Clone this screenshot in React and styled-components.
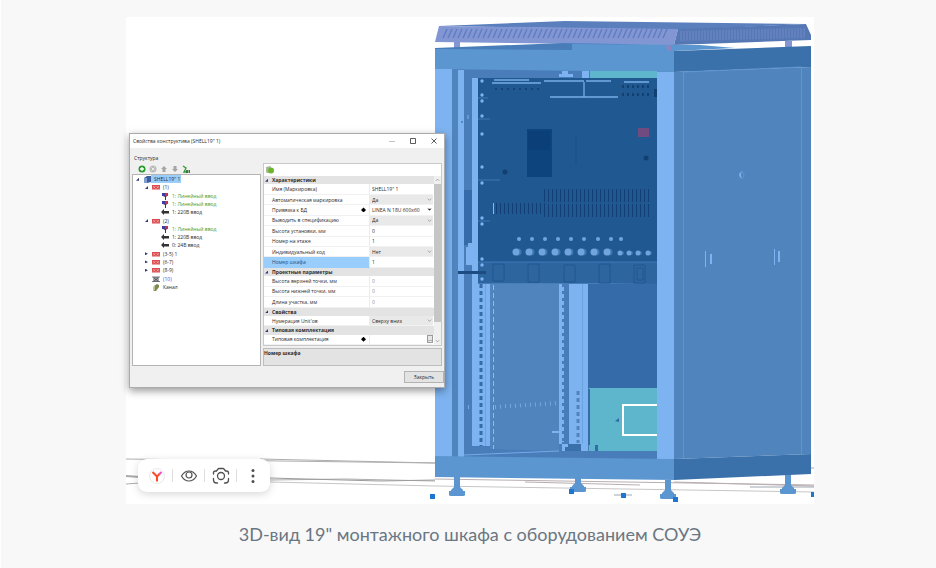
import React, { useId } from 'react';
import styled, { createGlobalStyle } from 'styled-components';

const colors = {
    page: '#f8f8f8',
    caption: '#6a7682',
    window: '#f0f0f0',
    border: '#a9abae',
    text: '#2b2b2b',
    muted: '#8c8c8c',
    green: '#3f9a2e',
    link: '#4a43e0',
    selected: '#99cdfb',
    section: '#e3e3e3',
    light: '#7db3f0',
    frame: '#5c96d0',
    panel: '#4f84bd',
    inner: '#487dba',
    deep: '#346ba8',
    side: '#3a71ab',
    device: '#205991',
    roof: '#8196d3',
    teal: '#5eb6cd',
};

const GlobalStyle = createGlobalStyle`
    * {
        box-sizing: border-box;
    }

    body {
        margin: 0;
        background: ${colors.page};
    }
`;

const Page = styled.main`
    min-height: 100vh;
    padding: 17px 0 16px 3px;
    border-left: 1px solid #fff;
`;

const Figure = styled.figure`
    max-width: 688px;
    margin: 0 auto;
`;

const Stage = styled.div`
    position: relative;
    background: #fff;
`;

const Caption = styled.figcaption`
    margin-top: 18px;
    font: 18px/24px Lato, 'Open Sans', sans-serif;
    text-align: center;
    color: ${colors.caption};
`;

const Drawing = styled.svg`
    display: block;
    width: 100%;
    height: auto;
`;

const Dialog = styled.section`
    position: absolute;
    left: 3px;
    top: 116px;
    width: 316px;
    border: 1px solid ${colors.border};
    background: ${colors.window};
    box-shadow: 0 3px 8px rgba(0, 0, 0, 0.4);
    color: ${colors.text};
    font: 5px/8px 'Open Sans', 'Noto Sans', sans-serif;
`;

const TitleBar = styled.header`
    display: flex;
    align-items: center;
    height: 14px;
    padding-left: 3px;
    background: #fff;
`;

const Title = styled.h2`
    flex: 1;
    margin: 0;
    font: inherit;
`;

const WindowButton = styled.button`
    display: flex;
    align-items: center;
    justify-content: center;
    width: 21px;
    height: 14px;
    padding: 0;
    border: 0;
    background: none;
    color: ${({ $dim }) => ($dim ? '#c4c4c4' : '#333')};

    svg {
        width: 6px;
        height: 6px;
    }
`;

const Heading = styled.h3`
    margin: 0;
    padding: 5px 4px 0;
    font: inherit;
    line-height: 10px;
`;

const Columns = styled.div`
    display: grid;
    grid-template-columns: 129px 1fr;
    gap: 2px;
    height: 203px;
    padding: 0 2px;
`;

const Column = styled.div`
    display: flex;
    flex-direction: column;
    min-height: 0;
`;

const TreeTools = styled.div`
    display: flex;
    align-items: center;
    gap: 3px;
    height: 11px;
    padding-left: 6px;
`;

const ToolButton = styled.button`
    display: flex;
    width: 8px;
    height: 8px;
    padding: 0;
    border: 0;
    background: none;

    svg {
        width: 8px;
        height: 8px;
    }
`;

const TreeBox = styled.div`
    flex: 1;
    border: 1px solid #b4b4b4;
    background: #fff;
`;

const Tree = styled.ul`
    display: grid;
    grid-auto-rows: 1fr;
    height: 116px;
    margin: 0;
    padding: 0;
    list-style: none;
`;

const Node = styled.li`
    display: flex;
    align-items: center;
    padding-left: ${({ $level }) => 2 + $level * 9}px;
    color: ${({ $color }) => $color || 'inherit'};

    svg {
        flex: none;
        width: 8px;
        height: 8px;
    }
`;

const Expander = styled.span`
    flex: none;
    width: 8px;
    color: #2f3a78;

    &::before {
        content: '';
        display: ${({ $state }) => ($state ? 'block' : 'none')};
        width: 3px;
        height: 3px;
        margin-left: 1px;
        background: currentColor;
        clip-path: ${({ $state }) =>
            $state === 'open' ? 'polygon(100% 0, 100% 100%, 0 100%)' : 'polygon(0 0, 100% 50%, 0 100%)'};
    }
`;

const NodeLabel = styled.span`
    padding: 0 1px 0 3px;
    background: ${({ $selected }) => ($selected ? colors.selected : 'none')};
    white-space: nowrap;
`;

const PropertyTools = styled.div`
    display: flex;
    align-items: center;
    height: 13px;
    padding-left: 2px;
    border: 1px solid #c9c9c9;
    border-bottom: 0;
    background: #fff;
`;

const PropertyArea = styled.div`
    display: flex;
    flex: 1;
    min-height: 0;
    border: 1px solid #c9c9c9;
    border-top: 0;
    background: #fff;
`;

const PropertyList = styled.form`
    display: flex;
    flex: 1;
    flex-direction: column;
    min-width: 0;
`;

const Section = styled.h4`
    display: flex;
    flex: 8 0 0;
    align-items: center;
    margin: 0;
    background: ${colors.section};
    font: inherit;
    font-weight: 700;
`;

const Property = styled.div`
    display: flex;
    flex: 10 0 0;
    align-items: stretch;
    min-height: 0;
`;

const PropertyName = styled.label`
    display: flex;
    align-items: center;
    justify-content: space-between;
    width: 106px;
    padding: 0 3px 0 8px;
    border-right: 1px solid #ececec;
    border-bottom: 1px solid ${({ $selected }) => ($selected ? colors.selected : '#f1f1f1')};
    background: ${({ $selected }) => ($selected ? colors.selected : 'none')};
    color: ${({ $selected }) => ($selected ? '#1d4f80' : 'inherit')};
`;

const Diamond = styled.span`
    width: 5px;
    height: 5px;
    background: #000;
    clip-path: polygon(50% 0, 100% 50%, 50% 100%, 0 50%);
`;

const Field = styled.span`
    display: flex;
    flex: 1;
    align-items: center;
    min-width: 0;
    margin-right: 1px;
    border-bottom: 1px solid #f1f1f1;
    background: ${({ $filled }) => ($filled ? '#e9e9e9' : 'none')};

    svg {
        flex: none;
        width: 5px;
        height: 5px;
        margin-right: 1px;
        pointer-events: none;
    }
`;

const TextInput = styled.input`
    flex: 1;
    width: 0;
    height: 8px;
    padding: 0 2px;
    border: 0;
    background: none;
    color: ${({ $muted }) => ($muted ? colors.muted : 'inherit')};
    font: inherit;
`;

const Choice = styled.select`
    flex: 1;
    width: 0;
    height: 8px;
    padding: 0 2px;
    border: 0;
    appearance: none;
    background: none;
    color: inherit;
    font: inherit;
`;

const MoreButton = styled.button`
    width: 6px;
    height: 8px;
    padding: 0;
    border: 1px solid #9c9c9c;
    background: #e6e6e6;
    font: inherit;
    line-height: 4px;
`;

const ScrollBar = styled.div`
    display: flex;
    flex-direction: column;
    align-items: center;
    width: 7px;
    background: ${colors.window};

    svg {
        width: 5px;
        height: 8px;
    }
`;

const ScrollTrack = styled.div`
    flex: 1;
    width: 100%;

    &::before {
        content: '';
        display: block;
        height: 90%;
        background: #c6c6c6;
    }
`;

const Description = styled.p`
    height: 18px;
    margin: 2px 0 0;
    border: 1px solid #bdbdbd;
    background: ${colors.section};
    font-weight: 700;
`;

const Footer = styled.footer`
    display: flex;
    justify-content: flex-end;
    padding: 5px 0 4px;
`;

const CloseButton = styled.button`
    width: 40px;
    height: 12px;
    padding: 0;
    border: 1px solid #b3b3b3;
    background: #e3e3e3;
    color: inherit;
    font: inherit;
`;

const Overlay = styled.div`
    position: absolute;
    left: 12px;
    bottom: 12px;
    display: flex;
    align-items: center;
    height: 33px;
    padding: 0 2px;
    border-radius: 9px;
    background: #fff;
    box-shadow: 0 2px 8px rgba(0, 0, 0, 0.16);
`;

const OverlayButton = styled.button`
    display: flex;
    align-items: center;
    justify-content: center;
    width: 32px;
    height: 13px;
    padding: 0;
    border: 0;
    border-left: 1px solid ${({ $first }) => ($first ? 'transparent' : '#dedede')};
    background: none;

    svg {
        flex: none;
        width: 18px;
        height: 18px;
        overflow: visible;
    }
`;

const range = (count, start, step) => Array.from({ length: count }, (_, i) => start + i * step);

const Foot = ({ x, y }) => (
    <path
        fill={colors.frame}
        d={`M${x - 3} ${y}h6v10l3 3v1h2v4q0 1-2 1h-12q-2 0-2-1v-4h2v-1l3-3z`}
    />
);

const Ground = () => (
    <g fill="none" stroke="#aeaeae" strokeWidth="1">
        <path d="M126 459L435 463M260 459L436 463" />
        <path d="M126 476L140 477" stroke="#a9a9a9" strokeWidth="2" />
        <path d="M126 484L140 483M270 480L345 479L435 481" />
        <path d="M270 478L380 481L435 480" stroke="#9c9c9c" />
        <path d="M270 482L435 486L814 492" stroke="#c6c6c6" />
        <path d="M435 479L814 485M525 482L640 485M674 482L814 486" stroke="#b7aeb0" />
        <path d="M750 487h64M811 468h3M614 495h18" stroke="#9fa5ad" />
    </g>
);

const Roof = () => (
    <g>
        <path fill="#5a7fbc" d="M439 26L565 21L806 24L678 30z" />
        <path fill={colors.roof} d="M439 26L678 29L674 45L435 42z" />
        <path fill="#5578b4" d="M678 29L806 24L811 35V40L674 45z" />
        <g stroke="#5f7cbf" strokeWidth="1.300">
            {range(45, 447, 5).map(x => (
                <path key={x} d={`M${x} 29l-4 9`} />
            ))}
        </g>
        <g stroke="#7089c6" strokeWidth="1">
            {range(42, 681, 3).map(x => (
                <path key={x} d={`M${x} ${31 - (x - 681) / 40}v10`} />
            ))}
        </g>
        <path fill={colors.roof} d="M454 42h6v6h-6zM785 41h7v6h-7z" />
    </g>
);

const Frame = () => (
    <g>
        <path fill={colors.inner} d="M435 48L563 43L674 45V459H435z" />
        <path fill={colors.frame} d="M435 49L572 50V44L700 45L735 48L674 51V72L435 69z" />
        <path fill="#8b85c4" d="M666 45l5 1v5l-4-1z" />
        <path fill={colors.side} d="M674 51L811 46V67L674 72z" />
        <path fill={colors.panel} d="M674 72L811 67V454L674 459z" />
        <path fill="none" stroke="#6095cf" d="M683.500 458V72L801.500 67V454" />
        <path fill={colors.light} d="M435 69h17v388h-17zM458 70h6v387h-6zM472 78h6v206h-6z" />
        <path fill={colors.panel} d="M452 69h6v388h-6z" />
        <path fill="none" stroke={colors.light} d="M468 115v4M705.500 251v16M774.500 249v16" />
        <path fill="none" stroke={colors.light} strokeWidth="2" d="M711 254v10M779 251v11" />
        <path fill={colors.light} d="M742 171q-6 4 0 8q-2-4 0-8z" />
        <path fill="none" stroke={colors.frame} d="M742 171q4 4 0 8" />
        <circle cx="462" cy="122" r="1" fill={colors.inner} />
    </g>
);

const Device = () => (
    <g>
        <path fill={colors.teal} d="M590 71h67v7h-67z" />
        <path fill={colors.light} d="M582 71h7v7h-7zM562 71h6v3h5v3h-14v-3h3z" />
        <path fill={colors.device} d="M478 78h179v184H478z" />
        <path fill="#2d659f" d="M478 262h179v22l-55-1H478z" />
        <path fill="none" stroke="#3e78b5" d="M478 98h10M478 119h12M478 180h22M478 221h12M478 262h179" />
        <g fill={colors.light}>
            {[81, 95, 101, 116, 134, 167, 183, 218, 224, 259, 265, 279].map(y => (
                <circle key={y} cx="482" cy={y} r="1.700" />
            ))}
        </g>
        <path
            fill="none"
            stroke="#78ade6"
            strokeWidth="1.300"
            d="M494 80h35M492 83h49M544 81h40M586 81h25M624 82h25M584 82v15M550 97h68"
        />
        <g fill="#123f70">
            {range(8, 496, 6).map(x => (
                <circle key={x} cx={x} cy="89" r="1" />
            ))}
            {range(6, 623, 5).map(x => (
                <path key={x} d={`M${x - 1} 85h2v3h-2zM${x - 1} 93h2v3h-2z`} />
            ))}
            <path d="M654 89h3v8h-3z" />
            <circle cx="505" cy="172" r="2.500" />
            <circle cx="646" cy="158" r="2.500" />
        </g>
        <path fill="#0d447d" d="M527 129h25v48h-25z" />
        <path fill="#073a71" d="M528 131h22v19h-22z" opacity=".4" />
        <path fill="#704b80" d="M638 128h11v9h-11z" />
        <path d="M576 135v30" stroke="#1a5088" />
        <g stroke="#123f75" strokeWidth="1">
            {range(27, 544, 4).map(x => (
                <path key={x} d={`M${x}.5 189v13M${x}.5 204v13`} />
            ))}
            {range(13, 496, 4).map(x => (
                <path key={x} d={`M${x}.5 203v11`} />
            ))}
        </g>
        <path d="M493.500 203v11" stroke="#8ab9ea" />
        <g fill="#6fa4dd">
            {[519, 532, 545, 558, 571, 584, 598, 611, 621].map(x => (
                <circle key={x} cx={x} cy="239" r="2" />
            ))}
            {range(8, 516, 13).map(x => (
                <g key={x}>
                    <circle cx={x + 2} cy="252" r="3.500" fill="#3e76b2" />
                    <circle cx={x} cy="252" r="3.500" />
                </g>
            ))}
            {[620, 629, 638, 648].map(x => (
                <g key={x}>
                    <circle cx={x + 2} cy="253" r="2" fill="#3e76b2" />
                    <circle cx={x} cy="253" r="2.500" />
                </g>
            ))}
        </g>
        <path
            fill="none"
            stroke="#225690"
            d="M493 264h11v17h-11zM528 264h11v18h-11zM564 265h11v17h-11zM599 264h11v19h-11zM634 265h11v18h-11zM637 268h6v12h-6z"
        />
        <path fill={colors.deep} d="M464 190h8v55h-8z" />
        <path fill={colors.light} d="M466 247h2v-4h4v22h-6z" />
        <path fill="#1c4c82" d="M458 271h28v3h-28z" />
    </g>
);

const Interior = () => (
    <g>
        <path fill={colors.panel} d="M490 284h69v168h-69z" />
        <path fill={colors.light} d="M472 284h18v162h-18zM559 284h3v160h-3zM569 284h19v168h-19z" />
        <path fill={colors.frame} d="M485 284h1v162h-1zM582 284h1v160h-1z" opacity=".55" />
        <path fill={colors.deep} d="M588 284h69v104h-69z" />
        <path fill="none" stroke="#356ca6" strokeWidth="3" strokeDasharray="4 3" d="M481 284v162" />
        <path fill="none" stroke="#8dbbf0" strokeWidth="1" strokeDasharray="5 3" d="M493.500 285v164" />
        <path fill="none" stroke={colors.light} strokeWidth="2" strokeDasharray="4 3" d="M563 287v155" />
        <path fill="none" stroke={colors.panel} strokeWidth="3" strokeDasharray="4 3" d="M578 391v52" />
        <path fill="none" stroke="#74a8e2" strokeWidth="4" strokeDasharray="1 4" d="M468 407h3M495 407L559 403" />
        <path fill={colors.teal} d="M589 388h68v65h-68z" />
        <path fill={colors.deep} d="M588 389h2v56h-2zM615 421l4-3v4zM595 445h3v7h-3z" />
        <path fill="none" stroke="#fff" strokeWidth="2" d="M657 405h-34v30h34" />
        <path fill={colors.side} d="M562 444h19v8h-19z" />
        <path fill={colors.light} d="M562 444h6v3h-3v4h-3zM552 431h7v2h-7z" />
        <path fill={colors.inner} d="M464 449h26l72 2h95v8H464z" />
        <path fill="none" stroke="#75aae5" d="M464 455L559 451" />
        <path fill={colors.light} d="M657 72h17v387h-17z" />
        <path fill={colors.frame} d="M435 456L674 459V480L435 477z" />
        <path fill={colors.side} d="M674 459L811 454V474L674 480z" />
    </g>
);

const Cabinet = () => (
    <Drawing viewBox="126 17 688 487" role="img" aria-label="Монтажный шкаф">
        <Ground />
        <Roof />
        <Frame />
        <Device />
        <Interior />
        <Foot x={457} y={477} />
        <Foot x={578} y={473} />
        <path fill={colors.frame} d="M560 470h40v8h-40z" />
        <Foot x={668} y={480} />
        <Foot x={788} y={475} />
        <path
            fill="#1f76d2"
            d="M430 494h5v5h-5zM569 489h5v5h-5zM621 493h5v5h-5zM673 497h5v5h-5zM811 492h5v5h-5z"
        />
    </Drawing>
);

const icons = {
    cabinet: (
        <svg viewBox="0 0 8 8">
            <path fill="#3d5f9c" d="M1 3l3-2h4v6L4 8H1z" />
            <path fill="#7f9fd4" d="M1 3h3v5H1z" />
        </svg>
    ),
    unit: (
        <svg viewBox="0 0 8 8">
            <path fill="#db4b4f" d="M0 2h8v4.500H0z" />
            <path fill="none" stroke="#fbd9d9" strokeWidth=".5" d="M1 3l2.500 2.500M3.500 3L1 5.500M4.500 3L7 5.500M7 3L4.500 5.500" />
        </svg>
    ),
    line: (
        <svg viewBox="0 0 8 8">
            <path fill="#3d3fa8" d="M1 1h3v3H1z" />
            <path fill="#c8323f" d="M4 1h3v3H4z" />
            <path fill="#493050" d="M2 4h4L5 5v3H4V5z" />
        </svg>
    ),
    power: (
        <svg viewBox="0 0 8 8">
            <path fill="#333" d="M0 4l3-3v2h5v2.500H3V7z" />
        </svg>
    ),
    blank: (
        <svg viewBox="0 0 8 8">
            <path fill="#a3a8ad" d="M1 2h6v4.500H1z" />
            <path stroke="#3c4045" strokeWidth=".7" d="M0 2h8M0 6.500h8M2 3l4 3M6 3L2 6" />
        </svg>
    ),
    channel: (
        <svg viewBox="0 0 8 8">
            <path fill="#7a8a55" d="M2 3l3-2 2 1v2L4 8H2z" />
            <path fill="#b9c68c" d="M1 4l2-2v5L1 8z" />
        </svg>
    ),
    add: (
        <svg viewBox="0 0 8 8">
            <circle cx="4" cy="4" r="3.500" fill="#269b2d" />
            <path stroke="#fff" strokeWidth="1.300" d="M4 2v4M2 4h4" />
        </svg>
    ),
    remove: (
        <svg viewBox="0 0 8 8">
            <circle cx="4" cy="4" r="3.500" fill="#bababa" />
            <path stroke="#eee" d="M2.500 2.500l3 3M5.500 2.500l-3 3" />
        </svg>
    ),
    up: (
        <svg viewBox="0 0 8 8">
            <path fill="#a6a6a6" d="M4 1l3 3H5.500v3h-3V4H1z" />
        </svg>
    ),
    down: (
        <svg viewBox="0 0 8 8">
            <path fill="#a6a6a6" d="M4 7L1 4h1.500V1h3v3H7z" />
        </svg>
    ),
    sort: (
        <svg viewBox="0 0 8 8">
            <path fill="none" stroke="#2f9e34" strokeWidth="1.300" d="M1 1l3 2-2 4h3" />
            <path fill="#3c7a40" d="M4 5h2v3H4zM6.500 5H8v3H6.500z" />
        </svg>
    ),
    database: (
        <svg viewBox="0 0 8 8">
            <path fill="#a9b8a2" d="M0 1l4-1 1 1v6H1L0 6z" />
            <circle cx="5" cy="4.500" r="3" fill="#6db52d" />
        </svg>
    ),
};

const Chevron = ({ up, solid }) => (
    <svg viewBox="0 0 6 6" aria-hidden="true">
        <path
            d={up ? 'M1 4l2-2 2 2' : 'M1 2l2 2 2-2'}
            fill={solid ? '#222' : 'none'}
            stroke={solid ? '#222' : '#777'}
            strokeWidth=".7"
        />
    </svg>
);

const tools = [
    ['add', 'Добавить'],
    ['remove', 'Удалить'],
    ['up', 'Выше'],
    ['down', 'Ниже'],
    ['sort', 'Сортировка'],
];

const nodes = [
    { level: 0, state: 'open', icon: 'cabinet', label: 'SHELL19" 1', selected: true },
    { level: 1, state: 'open', icon: 'unit', label: '(1)' },
    { level: 2, icon: 'line', label: '1: Линейный ввод', color: colors.green },
    { level: 2, icon: 'line', label: '1: Линейный ввод', color: colors.green },
    { level: 2, icon: 'power', label: '1: 220В ввод' },
    { level: 1, state: 'open', icon: 'unit', label: '(2)' },
    { level: 2, icon: 'line', label: '1: Линейный ввод', color: colors.green },
    { level: 2, icon: 'power', label: '1: 220В ввод' },
    { level: 2, icon: 'power', label: '0: 24В ввод' },
    { level: 1, state: 'closed', icon: 'unit', label: '(3-5) 1' },
    { level: 1, state: 'closed', icon: 'unit', label: '(6-7)' },
    { level: 1, state: 'closed', icon: 'unit', label: '(8-9)' },
    { level: 1, icon: 'blank', label: '(10)', color: colors.link },
    { level: 1, icon: 'channel', label: 'Канал' },
];

const sections = [
    {
        title: 'Характеристики',
        rows: [
            { name: 'Имя (Маркировка)', value: 'SHELL19" 1' },
            { name: 'Автоматическая маркировка', value: 'Да', kind: 'select' },
            { name: 'Привязка к БД', value: 'LINEA N 18U 600x60', kind: 'combo', mark: true },
            { name: 'Выводить в спецификацию', value: 'Да', kind: 'select' },
            { name: 'Высота установки, мм', value: '0' },
            { name: 'Номер на этаже', value: '1' },
            { name: 'Индивидуальный код', value: 'Нет', kind: 'select' },
            { name: 'Номер шкафа', value: '1', selected: true },
        ],
    },
    {
        title: 'Проектные параметры',
        rows: [
            { name: 'Высота верхней точки, мм', value: '0', muted: true },
            { name: 'Высота нижней точки, мм', value: '0', muted: true },
            { name: 'Длина участка, мм', value: '0', muted: true },
        ],
    },
    {
        title: 'Свойства',
        rows: [{ name: "Нумерация Unit'ов", value: 'Сверху вниз', kind: 'select' }],
    },
    {
        title: 'Типовая комплектация',
        rows: [{ name: 'Типовая комплектация', value: '', kind: 'more', mark: true }],
    },
];

const PropertyRow = ({ name, value, kind, mark, muted, selected }) => {
    const id = useId();
    const isChoice = kind === 'select' || kind === 'combo';

    return (
        <Property>
            <PropertyName htmlFor={id} $selected={selected}>
                {name}
                {mark && <Diamond />}
            </PropertyName>
            <Field $filled={kind === 'select'}>
                {isChoice ? (
                    <Choice id={id} defaultValue={value}>
                        <option>{value}</option>
                    </Choice>
                ) : (
                    <TextInput id={id} defaultValue={value} $muted={muted} />
                )}
                {isChoice && <Chevron solid={kind === 'combo'} />}
                {kind === 'more' && <MoreButton type="button">...</MoreButton>}
            </Field>
        </Property>
    );
};

const PropertiesDialog = () => (
    <Dialog>
        <TitleBar>
            <Title>Свойства конструктива (SHELL19" 1)</Title>
            <WindowButton aria-label="Свернуть" $dim>
                <svg viewBox="0 0 6 6">
                    <path stroke="currentColor" d="M0 3.500h6" />
                </svg>
            </WindowButton>
            <WindowButton aria-label="Развернуть">
                <svg viewBox="0 0 6 6">
                    <path fill="none" stroke="currentColor" strokeWidth=".8" d="M.5.5h5v5h-5z" />
                </svg>
            </WindowButton>
            <WindowButton aria-label="Закрыть окно">
                <svg viewBox="0 0 6 6">
                    <path stroke="currentColor" strokeWidth=".8" d="M.5.5l5 5M5.500.5l-5 5" />
                </svg>
            </WindowButton>
        </TitleBar>
        <Heading>Структура</Heading>
        <Columns>
            <Column>
                <TreeTools>
                    {tools.map(([icon, label]) => (
                        <ToolButton key={icon} aria-label={label}>
                            {icons[icon]}
                        </ToolButton>
                    ))}
                </TreeTools>
                <TreeBox>
                    <Tree>
                        {nodes.map(({ level, state, icon, label, color, selected }, i) => (
                            <Node key={i} $level={level} $color={color}>
                                <Expander $state={state} />
                                {icons[icon]}
                                <NodeLabel $selected={selected}>{label}</NodeLabel>
                            </Node>
                        ))}
                    </Tree>
                </TreeBox>
            </Column>
            <Column>
                <PropertyTools>
                    <ToolButton aria-label="База данных">{icons.database}</ToolButton>
                </PropertyTools>
                <PropertyArea>
                    <PropertyList>
                        {sections.map(({ title, rows }) => (
                            <React.Fragment key={title}>
                                <Section>
                                    <Expander $state="open" />
                                    {title}
                                </Section>
                                {rows.map(row => (
                                    <PropertyRow key={row.name} {...row} />
                                ))}
                            </React.Fragment>
                        ))}
                    </PropertyList>
                    <ScrollBar>
                        <Chevron up />
                        <ScrollTrack />
                        <Chevron />
                    </ScrollBar>
                </PropertyArea>
                <Description>Номер шкафа</Description>
            </Column>
        </Columns>
        <Footer>
            <CloseButton>Закрыть</CloseButton>
        </Footer>
    </Dialog>
);

const ImageActions = () => (
    <Overlay>
        <OverlayButton aria-label="Яндекс" $first>
            <svg viewBox="0 0 18 18">
                <circle cx="9" cy="9" r="7.500" fill="#fff" stroke="#e9e9e9" />
                <path fill="none" stroke="#fc4a20" strokeWidth="2" d="M4.500 5L9 9.500V14.500" />
                <path fill="none" stroke="#fc4a20" strokeWidth="2" d="M9 9.500L11.500 7" />
                <path fill="none" stroke="#f04bd0" strokeWidth="2" d="M11 7.500L13.500 5" />
            </svg>
        </OverlayButton>
        <OverlayButton aria-label="Посмотреть">
            <svg viewBox="0 0 18 18" fill="none" stroke="#505050" strokeWidth="1.200">
                <path d="M1.500 9C3.500 5.500 6 4 9 4s5.500 1.500 7.500 5c-2 3.500-4.500 5-7.500 5S3.500 12.500 1.500 9z" />
                <circle cx="9" cy="8" r="3" />
            </svg>
        </OverlayButton>
        <OverlayButton aria-label="Найти по картинке">
            <svg viewBox="0 0 18 18" fill="none" stroke="#505050" strokeWidth="1.300" strokeLinecap="round">
                <circle cx="9" cy="9" r="3.500" />
                <path d="M1.500 7V6q0-2 2-2h1L6 2q.5-.5 1-.5h4q.5 0 1 .5l1.500 2h1q2 0 2 2v1M1.500 11.500V13q0 3 3 3h1M16.500 11.500V13q0 3-3 3h-1" />
            </svg>
        </OverlayButton>
        <OverlayButton aria-label="Ещё">
            <svg viewBox="0 0 18 18" fill="#505050">
                <circle cx="9" cy="3.500" r="1.500" />
                <circle cx="9" cy="9" r="1.500" />
                <circle cx="9" cy="14.500" r="1.500" />
            </svg>
        </OverlayButton>
    </Overlay>
);

export default function App() {
    return (
        <>
            <GlobalStyle />
            <Page>
                <Figure>
                    <Stage>
                        <Cabinet />
                        <PropertiesDialog />
                        <ImageActions />
                    </Stage>
                    <Caption>3D-вид 19" монтажного шкафа с оборудованием СОУЭ</Caption>
                </Figure>
            </Page>
        </>
    );
}
